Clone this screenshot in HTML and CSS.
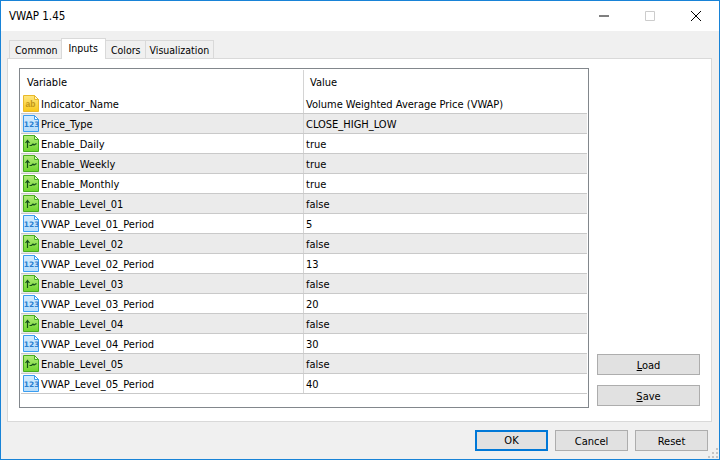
FILE: index.html
```html
<!DOCTYPE html>
<html lang="en">
<head>
<meta charset="utf-8">
<title>VWAP 1.45</title>
<link rel="stylesheet" href="styles.css">
</head>
<body>
<svg class="defs" width="0" height="0" aria-hidden="true">
  <defs>
    <linearGradient id="gy" x1="0" y1="0" x2="0" y2="1"><stop offset="0" stop-color="#ffe680"/><stop offset="1" stop-color="#f8c818"/></linearGradient>
    <linearGradient id="gb" x1="0" y1="0" x2="0" y2="1"><stop offset="0" stop-color="#d4ecff"/><stop offset="1" stop-color="#b4dbfa"/></linearGradient>
    <linearGradient id="gg" x1="0" y1="0" x2="0" y2="1"><stop offset="0" stop-color="#b4ec7c"/><stop offset="1" stop-color="#6ed42c"/></linearGradient>
    <symbol id="i-ab" viewBox="0 0 16 17">
      <path d="M.5 .5h11l4 4v12H.5z" fill="url(#gy)" stroke="#e8b92a"/>
      <path d="M11.500 .5v4h4z" fill="#fff6cf" stroke="#e8b92a"/>
      <text x="2.500" y="12" class="ic-ab">ab</text>
    </symbol>
    <symbol id="i-num" viewBox="0 0 16 17">
      <path d="M.5 .5h11l4 4v12H.5z" fill="url(#gb)" stroke="#3a9df0"/>
      <path d="M11.500 .5v4h4z" fill="#fff" stroke="#3a9df0"/>
      <text x=".8" y="12" class="ic-num">123</text>
    </symbol>
    <symbol id="i-bool" viewBox="0 0 16 17">
      <path d="M.5 .5h11l4 4v12H.5z" fill="url(#gg)" stroke="#46ad1e"/>
      <path d="M11.500 .5v4h4z" fill="#e4f8d0" stroke="#46ad1e"/>
      <path d="M4.500 13V6M2.500 8l2-2.500 2 2.500M6.500 10.500h2l1.500-1.500 1 1 2.500-1.500" fill="none" stroke="#14501a" stroke-width="1.200"/>
    </symbol>
  </defs>
</svg>
<div class="window">
  <header class="titlebar">
    <span class="title">VWAP 1.45</span>
    <div class="controls">
      <svg class="ctl" width="46" height="30" viewBox="0 0 46 30"><path d="M18 15h10" stroke="#000" fill="none"/></svg>
      <svg class="ctl" width="46" height="30" viewBox="0 0 46 30"><path d="M18.500 10.500h9v9h-9z" stroke="#ccc" fill="none"/></svg>
      <svg class="ctl" width="46" height="30" viewBox="0 0 46 30"><path d="M18 10l10 10M28 10L18 20" stroke="#000" fill="none"/></svg>
    </div>
  </header>
  <div class="body">
    <nav class="tabs">
      <span class="tab tab-first">Common</span>
      <span class="tab active">Inputs</span>
      <span class="tab tab-after">Colors</span>
      <span class="tab">Visualization</span>
    </nav>
    <section class="page">
      <div class="grid">
        <div class="grid-head"><span class="cell-var">Variable</span><span class="cell-val">Value</span></div>
        <div class="row"><span class="cell-var"><svg class="ic"><use href="#i-ab"/></svg>Indicator_Name</span><span class="cell-val">Volume Weighted Average Price (VWAP)</span></div>
        <div class="row alt"><span class="cell-var"><svg class="ic"><use href="#i-num"/></svg>Price_Type</span><span class="cell-val">CLOSE_HIGH_LOW</span></div>
        <div class="row"><span class="cell-var"><svg class="ic"><use href="#i-bool"/></svg>Enable_Daily</span><span class="cell-val">true</span></div>
        <div class="row alt"><span class="cell-var"><svg class="ic"><use href="#i-bool"/></svg>Enable_Weekly</span><span class="cell-val">true</span></div>
        <div class="row"><span class="cell-var"><svg class="ic"><use href="#i-bool"/></svg>Enable_Monthly</span><span class="cell-val">true</span></div>
        <div class="row alt"><span class="cell-var"><svg class="ic"><use href="#i-bool"/></svg>Enable_Level_01</span><span class="cell-val">false</span></div>
        <div class="row"><span class="cell-var"><svg class="ic"><use href="#i-num"/></svg>VWAP_Level_01_Period</span><span class="cell-val">5</span></div>
        <div class="row alt"><span class="cell-var"><svg class="ic"><use href="#i-bool"/></svg>Enable_Level_02</span><span class="cell-val">false</span></div>
        <div class="row"><span class="cell-var"><svg class="ic"><use href="#i-num"/></svg>VWAP_Level_02_Period</span><span class="cell-val">13</span></div>
        <div class="row alt"><span class="cell-var"><svg class="ic"><use href="#i-bool"/></svg>Enable_Level_03</span><span class="cell-val">false</span></div>
        <div class="row"><span class="cell-var"><svg class="ic"><use href="#i-num"/></svg>VWAP_Level_03_Period</span><span class="cell-val">20</span></div>
        <div class="row alt"><span class="cell-var"><svg class="ic"><use href="#i-bool"/></svg>Enable_Level_04</span><span class="cell-val">false</span></div>
        <div class="row"><span class="cell-var"><svg class="ic"><use href="#i-num"/></svg>VWAP_Level_04_Period</span><span class="cell-val">30</span></div>
        <div class="row alt"><span class="cell-var"><svg class="ic"><use href="#i-bool"/></svg>Enable_Level_05</span><span class="cell-val">false</span></div>
        <div class="row"><span class="cell-var"><svg class="ic"><use href="#i-num"/></svg>VWAP_Level_05_Period</span><span class="cell-val">40</span></div>
      </div>
      <aside class="side">
        <button class="btn side-btn"><u>L</u>oad</button>
        <button class="btn side-btn"><u>S</u>ave</button>
      </aside>
    </section>
    <footer class="footer">
      <button class="btn foot-btn default">OK</button>
      <button class="btn foot-btn">Cancel</button>
      <button class="btn foot-btn">Reset</button>
    </footer>
  </div>
  <svg class="grip" width="11" height="11" viewBox="0 0 11 11"><path d="M8 0h2v2H8zM4 4h2v2H4zM8 4h2v2H8zM0 8h2v2H0zM4 8h2v2H4zM8 8h2v2H8z" fill="#c4c4c4"/></svg>
</div>
</body>
</html>
```
FILE: styles.css
```css
* { box-sizing: border-box; }
html, body { margin: 0; padding: 0; }
body {
  width: 720px;
  height: 460px;
  overflow: hidden;
  font-family: "DejaVu Sans Condensed", "DejaVu Sans", sans-serif;
  font-stretch: condensed;
  font-size: 11px;
  color: #000;
  background: #f0f0f0;
}
.defs { position: absolute; }
.ic-ab { font: bold 8.500px "Liberation Sans", sans-serif; fill: #c0951a; }
.ic-num { font: bold 7.500px "DejaVu Sans", sans-serif; fill: #2a7fd0; }
.window {
  position: relative;
  width: 720px;
  height: 460px;
  border: 1px solid #1883d7;
  display: flex;
  flex-direction: column;
  background: #f0f0f0;
}
.grip { position: absolute; right: 0; bottom: 0; }
.titlebar {
  height: 30px;
  flex: none;
  background: #fff;
  display: flex;
  align-items: center;
  justify-content: space-between;
}
.title { font-size: 11.500px; padding-left: 8px; }
.controls { display: flex; gap: 0; }
.ctl { display: block; }
.body { flex: 1; display: flex; flex-direction: column; padding: 9px 7px 0 6px; min-height: 0; }
.tabs { display: flex; height: 18px; flex: none; padding-left: 2px; align-items: flex-end; position: relative; z-index: 1; font-size: 10.500px; }
.tab {
  height: 18px;
  padding: 0 4px;
  line-height: 18px;
  background: #f0f0f0;
  border: 1px solid #d9d9d9;
  border-bottom: none;
  margin-left: -1px;
}
.tab-first { margin-left: 0; padding: 0 3px 0 5px; }
.tab-after { padding: 0 4px 0 6px; }
.tab.active {
  height: 21px;
  background: #fff;
  padding: 0 7px;
  line-height: 18px;
  margin-bottom: -1px;
  margin-right: -1px;
  position: relative;
  z-index: 2;
}
.page {
  height: 364px;
  flex: none;
  background: #fff;
  border: 1px solid #d9d9d9;
  padding: 9px 11px 13px 11px;
  display: flex;
  justify-content: space-between;
}
.grid {
  width: 570px;
  height: 340px;
  border: 1px solid #82878c;
  padding: 1px;
  background: #fff;
}
.grid-head { height: 24px; display: flex; align-items: center; }
.row {
  height: 20px;
  display: flex;
  align-items: center;
  border-bottom: 1px solid #c9c9c9;
}
.row.alt { background: #ebebeb; }
.cell-var { width: 283px; flex: none; display: flex; align-items: center; padding-left: 2px; padding-top: 1px; height: 100%; border-right: 1px solid #d4d4d4; white-space: nowrap; }
.grid-head .cell-var { padding-left: 6px; padding-top: 0; }
.cell-val { padding-left: 2px; padding-top: 1px; white-space: nowrap; }
.grid-head .cell-val { padding-left: 6px; padding-top: 0; }
.ic { width: 16px; height: 17px; flex: none; margin: -1px 2px 0 0; }
.side {
  width: 103px;
  display: flex;
  flex-direction: column;
  justify-content: flex-end;
  gap: 10px;
  margin-bottom: 2px;
}
.btn {
  font: inherit;
  color: #000;
  background: #e1e1e1;
  border: 1px solid #adadad;
  padding: 2px 0 0;
  height: 21px;
  border-radius: 0;
}
.side-btn { width: 103px; }
.footer {
  flex: 1;
  display: flex;
  justify-content: flex-end;
  align-items: flex-start;
  gap: 7px;
  padding-top: 8px;
  padding-right: 4px;
}
.foot-btn { width: 73px; }
.default { border: 2px solid #0078d7; padding-top: 0; }
```
